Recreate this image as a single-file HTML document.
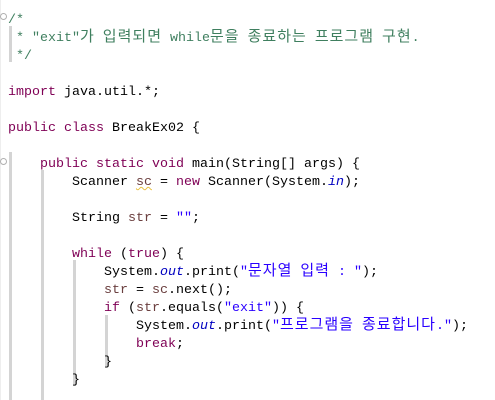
<!DOCTYPE html>
<html><head><meta charset="utf-8"><style>
body{margin:0;width:495px;height:400px;background:#fff;overflow:hidden;position:relative}
pre{position:absolute;left:8px;top:12px;margin:0;font-family:"Liberation Mono",monospace;font-size:13.33px;line-height:18px;color:#000}
.k{color:#7F0055}.c{color:#3F7F5F}.s{color:#2A00FF}.f{color:#0000C0;font-style:italic}.v{color:#6A3E3E}
.h{letter-spacing:1px;font-size:15px;font-family:"Noto Sans CJK KR",sans-serif;line-height:0}
.g{position:absolute;width:3px;background:#d4d4d4}
.fold{position:absolute;left:0;width:7px;height:7px;border:1px solid #b0b0b0;border-radius:50%;box-sizing:border-box}
.sq{text-decoration:underline wavy #e8c040;text-decoration-thickness:1px}
</style></head><body>
<div style="position:absolute;left:0;top:0;width:1px;height:400px;background:#eee"></div>
<div class="fold" style="top:13px"></div>
<div class="fold" style="top:158px"></div>
<div class="g" style="left:9px;top:26px;height:36px"></div>
<div class="g" style="left:9px;top:152px;height:248px"></div>
<div class="g" style="left:41px;top:170px;height:230px"></div>
<div class="g" style="left:73px;top:260px;height:126px"></div>
<div class="g" style="left:105px;top:315px;height:52px"></div>
<pre><span class="c">/*
 * "exit"<span class="h">가</span> <span class="h">입력되면</span> while<span class="h">문을</span> <span class="h">종료하는</span> <span class="h">프로그램</span> <span class="h">구현</span>.
 */</span>

<span class="k">import</span> java.util.*;

<span class="k">public</span> <span class="k">class</span> BreakEx02 {

    <span class="k">public</span> <span class="k">static</span> <span class="k">void</span> main(String[] args) {
        Scanner <span class="v sq">sc</span> = <span class="k">new</span> Scanner(System.<span class="f">in</span>);

        String <span class="v">str</span> = <span class="s">""</span>;

        <span class="k">while</span> (<span class="k">true</span>) {
            System.<span class="f">out</span>.print(<span class="s">"<span class="h">문자열</span> <span class="h">입력</span> : "</span>);
            <span class="v">str</span> = <span class="v">sc</span>.next();
            <span class="k">if</span> (<span class="v">str</span>.equals(<span class="s">"exit"</span>)) {
                System.<span class="f">out</span>.print(<span class="s">"<span class="h">프로그램을</span> <span class="h">종료합니다</span>."</span>);
                <span class="k">break</span>;
            }
        }
</pre>
</body></html>
